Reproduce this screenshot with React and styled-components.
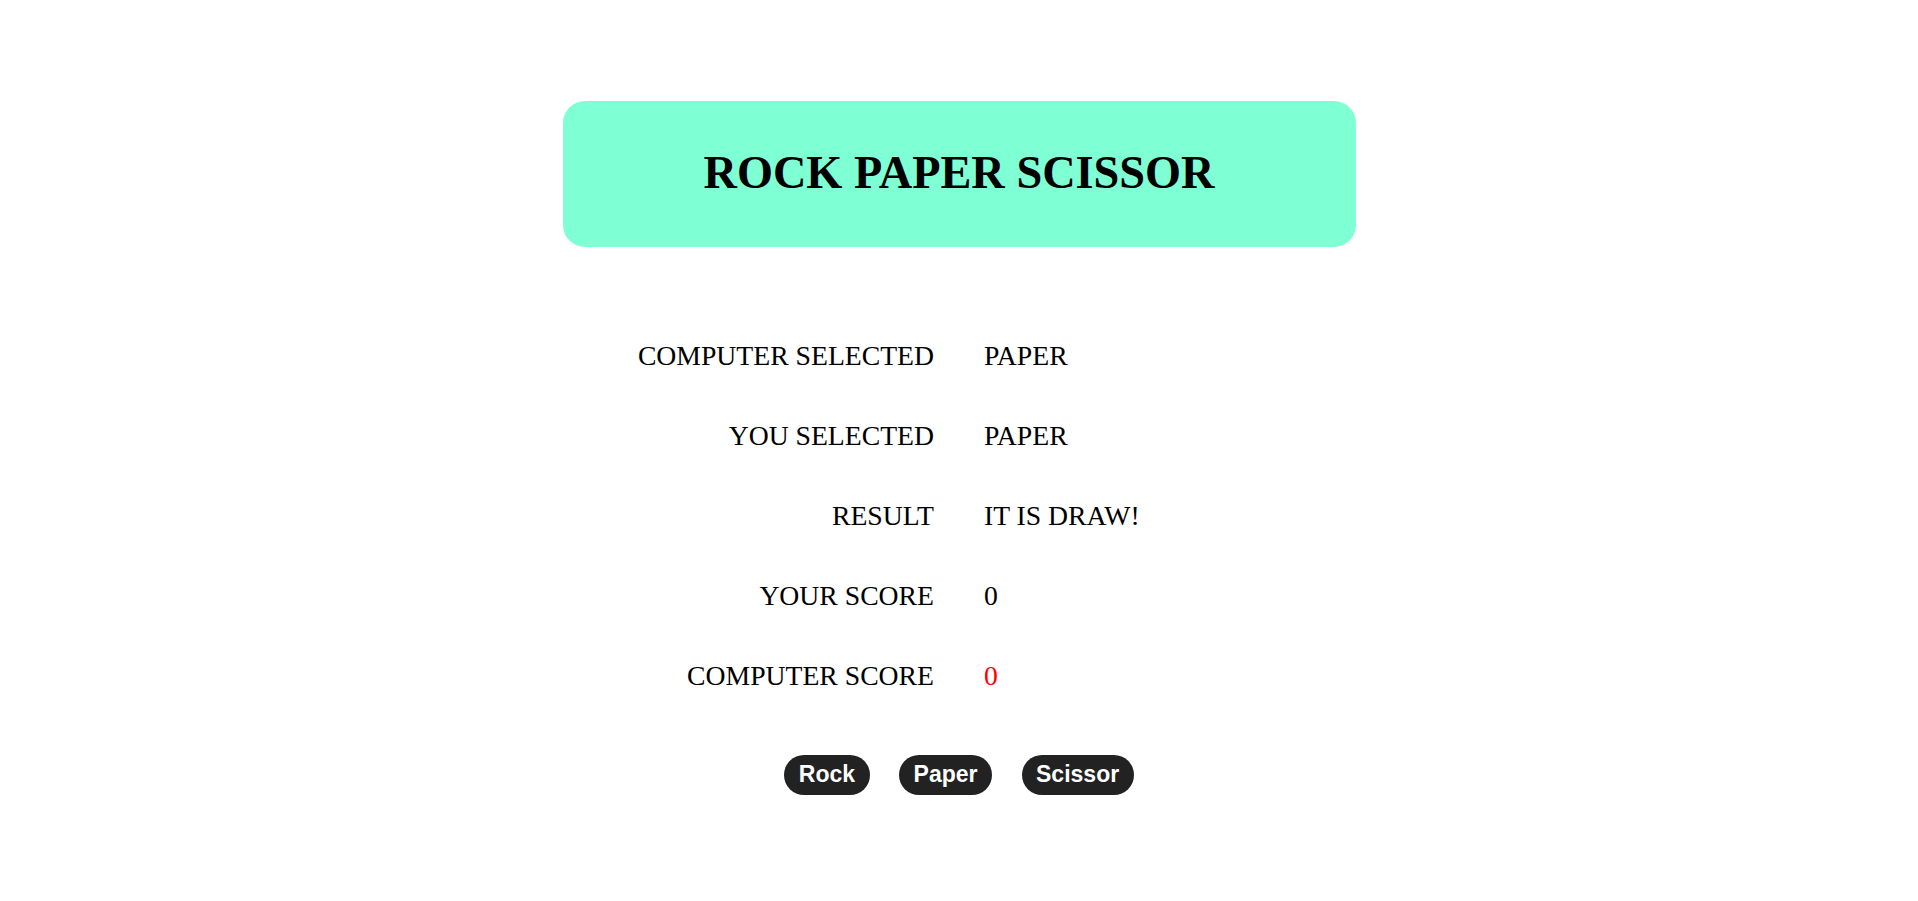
import React from 'react'
import styled, { createGlobalStyle } from 'styled-components'

const GlobalStyle = createGlobalStyle`
  body {
    margin: 0;
    background-color: #ffffff;
    font-family: "Liberation Serif", "Times New Roman", serif;
  }
`

const rows = [
  { label: 'COMPUTER SELECTED', value: 'PAPER' },
  { label: 'YOU SELECTED', value: 'PAPER' },
  { label: 'RESULT', value: 'IT IS DRAW!' },
  { label: 'YOUR SCORE', value: '0' },
  { label: 'COMPUTER SCORE', value: '0', warn: true },
]

function App() {
  return (
    <Page>
      <GlobalStyle />
      <Header>
        <Title>ROCK PAPER SCISSOR</Title>
      </Header>

      <Board>
        {rows.map((row) => (
          <React.Fragment key={row.label}>
            <Label>{row.label}</Label>
            <Value warn={row.warn}>{row.value}</Value>
          </React.Fragment>
        ))}
      </Board>

      <Choices>
        <ChoiceBtn>Rock</ChoiceBtn>
        <ChoiceBtn>Paper</ChoiceBtn>
        <ChoiceBtn>Scissor</ChoiceBtn>
      </Choices>
    </Page>
  )
}

export default App

const Page = styled.div`
  display: flex;
  flex-direction: column;
  align-items: center;
  padding-top: 101px;
`

const Header = styled.div`
  width: 793px;
  height: 146px;
  box-sizing: border-box;
  padding-bottom: 1px;
  background-color: #7fffd4;
  border-radius: 22px;
  display: flex;
  justify-content: center;
  align-items: center;
`

const Title = styled.h1`
  margin: 0;
  font-size: 46.3px;
  font-weight: bold;
  line-height: 1;
  color: #000000;
`

const Board = styled.div`
  width: 900px;
  margin-top: 89px;
  display: grid;
  grid-template-columns: 1fr 1fr;
  column-gap: 50px;
  row-gap: 40px;
  font-size: 27.7px;
  line-height: 40px;
`

const Label = styled.div`
  text-align: right;
  color: #000000;
`

const Value = styled.div`
  text-align: left;
  color: ${props => props.warn ? '#ff0000' : '#000000'};
`

const Choices = styled.div`
  margin-top: 58.5px;
  display: flex;
  gap: 29.5px;
`

const ChoiceBtn = styled.button`
  height: 40px;
  padding: 0 14.5px;
  border: none;
  border-radius: 20px;
  background-color: #222222;
  color: #ffffff;
  font-family: "Liberation Sans", Arial, sans-serif;
  font-size: 23px;
  font-weight: bold;
  cursor: pointer;
`
